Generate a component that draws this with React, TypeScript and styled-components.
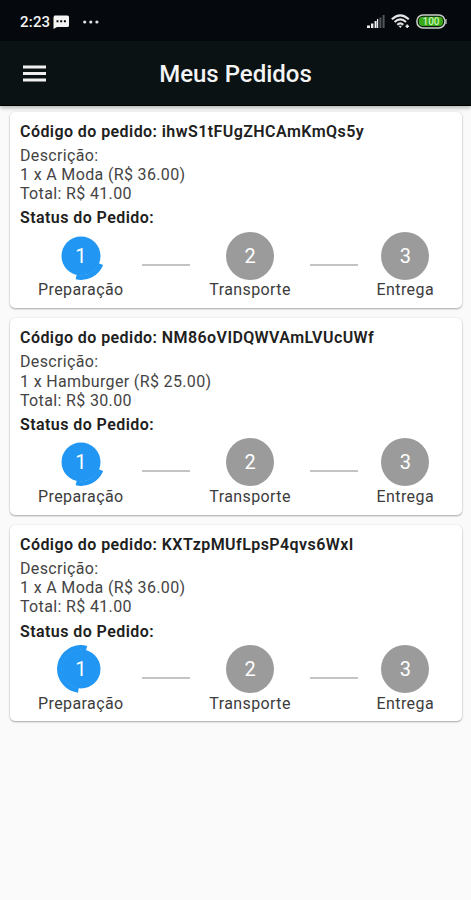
import React from 'react';
import styled, { createGlobalStyle } from 'styled-components';

const GlobalStyle = createGlobalStyle`
  * { box-sizing: border-box; }
  html, body { margin: 0; background: #fafafa; }
  body { font-family: Roboto, "Liberation Sans", sans-serif; overflow: hidden; }
`;

const Screen = styled.div`
  width: 471px;
  height: 900px;
  display: flex;
  flex-direction: column;
  background: #fafafa;
`;

const Header = styled.header`
  flex: none;
  position: relative;
  z-index: 1;
  height: 106px;
  background: #0a1214;
  border-bottom: 1px solid #000;
  box-shadow: 0 2px 4px rgba(0, 0, 0, 0.28);
  color: #f4f4f4;
`;

const StatusBar = styled.div`
  height: 41px;
  padding: 2px 24px 0 20px;
  display: flex;
  align-items: center;
  justify-content: space-between;
  background: #05090d;
`;

const StatusGroup = styled.div`
  display: flex;
  align-items: center;
`;

const Clock = styled.span`
  width: 33px;
  font-size: 15px;
  line-height: 18px;
  font-weight: 500;
  letter-spacing: 0.2px;
`;

const ChatIcon = styled.svg`
  margin-right: 13px;
`;

const SignalIcon = styled.svg`
  margin-right: 6px;
`;

const WifiIcon = styled.svg`
  margin-right: 6px;
`;

const Toolbar = styled.div`
  height: 64px;
  display: grid;
  grid-template-columns: 68px 1fr 68px;
  align-items: center;
`;

const MenuButton = styled.button`
  border: 0;
  padding: 0 0 0 23px;
  background: none;
  display: flex;
`;

const Title = styled.h1`
  margin: 2px 0 0;
  text-align: center;
  font-size: 24px;
  line-height: 28px;
  font-weight: 500;
  letter-spacing: 0;
`;

const Orders = styled.main`
  padding: 5.6px 9px 0 10px;
  display: flex;
  flex-direction: column;
  gap: 10px;
`;

const Card = styled.article`
  height: 196.6px;
  padding: 10px 9px 9px 10px;
  border-radius: 5px;
  background: #fff;
  box-shadow: 0 1px 2px rgba(0, 0, 0, 0.32), 0 0 2px rgba(0, 0, 0, 0.08);
  color: #202020;
`;

const Heading = styled.h2`
  margin: 0;
  font-size: 16px;
  line-height: 19.3px;
  font-weight: 600;
  letter-spacing: 0.43px;
  white-space: nowrap;
`;

const Description = styled.p`
  margin: 4.8px 0;
  font-size: 16px;
  line-height: 19.3px;
  letter-spacing: 0.35px;
  color: #444;
  white-space: pre-line;
`;

const Steps = styled.div`
  margin-top: 4px;
  padding: 0 19px 0 18px;
  display: flex;
  align-items: flex-start;
  justify-content: space-between;
`;

const Step = styled.div`
  display: flex;
  flex-direction: column;
  align-items: center;
`;

const StepLabel = styled.span`
  margin-top: 0.8px;
  font-size: 16px;
  line-height: 19.3px;
  letter-spacing: 0.4px;
  color: #3c3c3c;
`;

const Badge = styled.div<{ $active: boolean }>`
  display: grid;
  width: 48px;
  height: 48px;
  place-items: center;
  border-radius: 50%;
  background: ${(p) => (p.$active ? 'transparent' : '#9b9b9b')};
  color: #fff;
  font-size: 20px;
  line-height: 24px;

  & > * { grid-area: 1 / 1; }
`;

const BadgeNumber = styled.span`
  z-index: 1;
`;

const Connector = styled.div`
  width: 48px;
  height: 2px;
  margin-top: 32px;
  background: #c4c4c4;
`;

type Arc = [start: number, end: number];

function Spinner({ arc }: { arc: Arc }) {
  const at = (deg: number) => {
    const a = (deg * Math.PI) / 180;
    return `${24 + 21.5 * Math.cos(a)} ${24 + 21.5 * Math.sin(a)}`;
  };
  const large = arc[1] - arc[0] > 180 ? 1 : 0;
  return (
    <svg width="48" height="48" viewBox="0 0 48 48">
      <circle cx="24" cy="24" r="19.5" fill="#2196f3" />
      <path
        d={`M${at(arc[0])} A21.5 21.5 0 ${large} 1 ${at(arc[1])}`}
        fill="none"
        stroke="#2196f3"
        strokeWidth="4.8"
      />
    </svg>
  );
}

interface Order {
  code: string;
  item: string;
  total: string;
  arc: Arc;
}

const orders: Order[] = [
  { code: 'ihwS1tFUgZHCAmKmQs5y', item: '1 x A Moda (R$ 36.00)', total: 'R$ 41.00', arc: [22, 103] },
  { code: 'NM86oVIDQWVAmLVUcUWf', item: '1 x Hamburger (R$ 25.00)', total: 'R$ 30.00', arc: [22, 103] },
  { code: 'KXTzpMUfLpsP4qvs6WxI', item: '1 x A Moda (R$ 36.00)', total: 'R$ 41.00', arc: [97, 285] },
];

const stepNames = ['Preparação', 'Transporte', 'Entrega'];

function OrderCard({ order }: { order: Order }) {
  return (
    <Card>
      <Heading>Código do pedido: {order.code}</Heading>
      <Description>{`Descrição:\n${order.item}\nTotal: ${order.total}`}</Description>
      <Heading>Status do Pedido:</Heading>
      <Steps>
        {stepNames.map((name, i) => (
          <React.Fragment key={name}>
            {i > 0 && <Connector />}
            <Step>
              <Badge $active={i === 0}>
                {i === 0 && <Spinner arc={order.arc} />}
                <BadgeNumber>{i + 1}</BadgeNumber>
              </Badge>
              <StepLabel>{name}</StepLabel>
            </Step>
          </React.Fragment>
        ))}
      </Steps>
    </Card>
  );
}

export default function App() {
  return (
    <>
      <GlobalStyle />
      <Screen>
        <Header>
          <StatusBar>
            <StatusGroup>
              <Clock>2:23</Clock>
              <ChatIcon width="17" height="14" viewBox="0 0 17 14">
                <path d="M1.5 0.5h13a1.5 1.5 0 0 1 1.5 1.5v8.5a1.5 1.5 0 0 1-1.5 1.5H4L0.5 14V2Z" fill="#f4f4f4" />
                <path d="M3.5 5.2h2v2h-2zM7.2 5.2h2v2h-2zM10.9 5.2h2v2h-2z" fill="#05090d" />
              </ChatIcon>
              <svg width="16" height="4" viewBox="0 0 16 4" fill="#e4e4e4">
                <circle cx="1.7" cy="2" r="1.6" />
                <circle cx="7.8" cy="2" r="1.6" />
                <circle cx="13.9" cy="2" r="1.6" />
              </svg>
            </StatusGroup>
            <StatusGroup>
              <SignalIcon width="18" height="13" viewBox="0 0 18 13">
                <path d="M0 10.5h3V13H0zM4 8.5h2.4V13H4zM7.6 6h2V13h-2zM10 4h1.2v9H10z" fill="#eee" />
                <path d="M12.4 2.5h2V13h-2zM15.6 0h2v13h-2z" fill="#50565a" />
              </SignalIcon>
              <WifiIcon width="19" height="15" viewBox="0 0 19 15" fill="none" stroke="#e6e6e6" strokeWidth="2.1">
                <path d="M0.8 5.2Q9.3-2.6 17.8 5.2M3.6 8Q9.3 2.8 15 8M6.3 10.7Q9.3 8 12.3 10.7" />
                <path d="M7.5 11.8h3.6L9.3 14z" fill="#e6e6e6" stroke="none" />
                <path d="M14.5 12.2h3.5M16.2 10.5v3.5" strokeWidth="1.5" />
              </WifiIcon>
              <svg width="31" height="15" viewBox="0 0 31 15">
                <rect x="0.9" y="0.9" width="28" height="13" rx="6" fill="#0b1a0a" stroke="#c9cfc9" strokeWidth="1.5" />
                <rect x="2.8" y="2.8" width="24.2" height="9.2" rx="4" fill="#38a818" />
                <path d="M30 5v5" stroke="#c9cfc9" strokeWidth="1.2" />
                <text x="15" y="11" textAnchor="middle" fontSize="10" fontWeight="500" fill="#c8f5b4" fontFamily="Roboto, sans-serif">100</text>
              </svg>
            </StatusGroup>
          </StatusBar>
          <Toolbar>
            <MenuButton aria-label="Menu">
              <svg width="23" height="17" viewBox="0 0 23 17" stroke="#f0f0f0" strokeWidth="3">
                <path d="M0 2h23M0 8.5h23M0 15h23" />
              </svg>
            </MenuButton>
            <Title>Meus Pedidos</Title>
          </Toolbar>
        </Header>
        <Orders>
          {orders.map((order) => (
            <OrderCard key={order.code} order={order} />
          ))}
        </Orders>
      </Screen>
    </>
  );
}
